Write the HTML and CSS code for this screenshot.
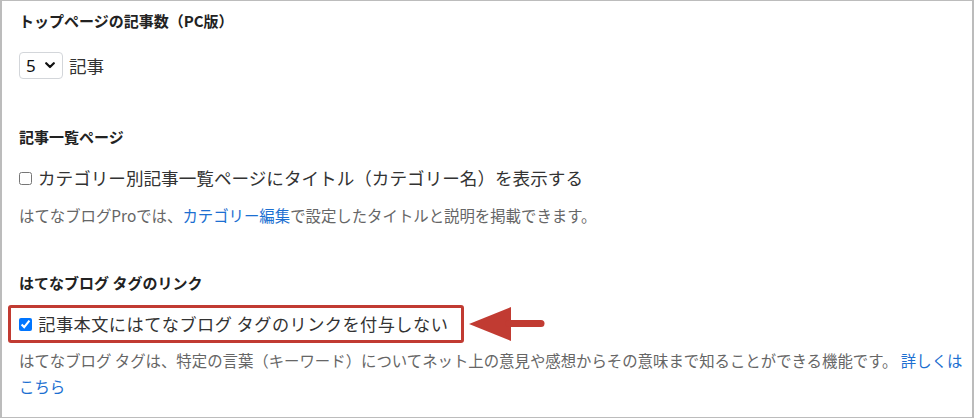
FILE: index.html
```html
<!DOCTYPE html>
<html lang="ja">
<head>
<meta charset="utf-8">
<title>設定</title>
<link rel="stylesheet" href="styles.css">
</head>
<body>
<div class="frame">
  <section class="sec sec-top">
    <h3 class="heading">トップページの記事数（PC版）</h3>
    <div class="count-row">
      <div class="select"><span class="select-val">5</span><svg class="chev" width="10" height="7" viewBox="0 0 10 7"><path d="M1.2 1.2 L5 5 L8.8 1.2" fill="none" stroke="#111" stroke-width="2.2" stroke-linecap="round" stroke-linejoin="round"/></svg></div>
      <span class="unit">記事</span>
    </div>
  </section>

  <section class="sec sec-list">
    <h3 class="heading">記事一覧ページ</h3>
    <label class="check-row"><input type="checkbox" class="cb"> カテゴリー別記事一覧ページにタイトル（カテゴリー名）を表示する</label>
    <p class="help">はてなブログProでは、<a class="link" href="#">カテゴリー編集</a>で設定したタイトルと説明を掲載できます。</p>
  </section>

  <section class="sec sec-tag">
    <h3 class="heading">はてなブログ タグのリンク</h3>
    <div class="highlight-row">
      <div class="highlight">
        <label class="check-row check-tag"><input type="checkbox" class="cb" checked> 記事本文にはてなブログ タグのリンクを付与しない</label>
      </div>
      <svg class="arrow" width="76" height="36" viewBox="0 0 76 36"><polygon points="0,18 42,1 42,35" fill="#c13b32"/><line x1="40" y1="17.5" x2="72" y2="17.5" stroke="#c13b32" stroke-width="7" stroke-linecap="round"/></svg>
    </div>
    <p class="help help-wide">はてなブログ タグは、特定の言葉（キーワード）についてネット上の意見や感想からその意味まで知ることができる機能です。 <a class="link" href="#">詳しくは</a><a class="link" href="#">こちら</a></p>
  </section>
</div>
</body>
</html>
```

FILE: styles.css
```css
* { box-sizing: border-box; }
html, body { margin: 0; padding: 0; background: #fff; }
body {
  font-family: "Noto Sans CJK JP", "Noto Sans", sans-serif;
  color: #333;
}
.frame {
  width: 974px;
  height: 418px;
  border: 1px solid #bcbcbc;
  border-left-width: 2px;
  border-right-width: 2px;
  padding: 9px 0 0 17px;
  overflow: hidden;
}
.heading {
  margin: 0;
  font-size: 15px;
  font-weight: bold;
  color: #222;
  line-height: 22px;
}
.count-row {
  display: flex;
  align-items: center;
  gap: 6px;
  margin-top: 20px;
}
.select {
  width: 44px;
  height: 27px;
  border: 1px solid #d3d6da;
  border-radius: 4px;
  display: flex;
  align-items: center;
  justify-content: space-between;
  padding: 0 7px 0 6px;
  background: #fff;
}
.select-val {
  font-family: "Noto Sans", sans-serif;
  font-size: 17px;
  color: #111;
  line-height: 1;
}
.chev { display: block; }
.unit {
  font-size: 17.6px;
  color: #333;
  line-height: 1;
}
.sec-list { margin-top: 47px; }
.check-row {
  display: flex;
  align-items: center;
  font-size: 17.6px;
  color: #333;
  line-height: 24px;
  white-space: pre;
}
.check-tag {
  font-size: 17.2px;
  letter-spacing: 0.45px;
}
.cb {
  margin: 0 2px 0 0;
  width: 13px;
  height: 13px;
}
.sec-list .check-row { margin-top: 18px; }
.help {
  margin: 12px 0 0;
  font-size: 15.4px;
  color: #666;
  line-height: 26px;
}
.link { color: #1c6fd1; text-decoration: none; }
.sec-tag { margin-top: 44px; }
.highlight-row {
  display: flex;
  align-items: center;
  gap: 5px;
  margin-top: 11px;
  margin-left: -11px;
}
.highlight {
  width: 456px;
  height: 38px;
  border: 3px solid #c13b32;
  border-radius: 3px;
  display: flex;
  align-items: center;
  padding-left: 8px;
  overflow: hidden;
}
.arrow { display: block; }
.help-wide {
  margin-top: 4px;
  margin-right: 0;
}
```
